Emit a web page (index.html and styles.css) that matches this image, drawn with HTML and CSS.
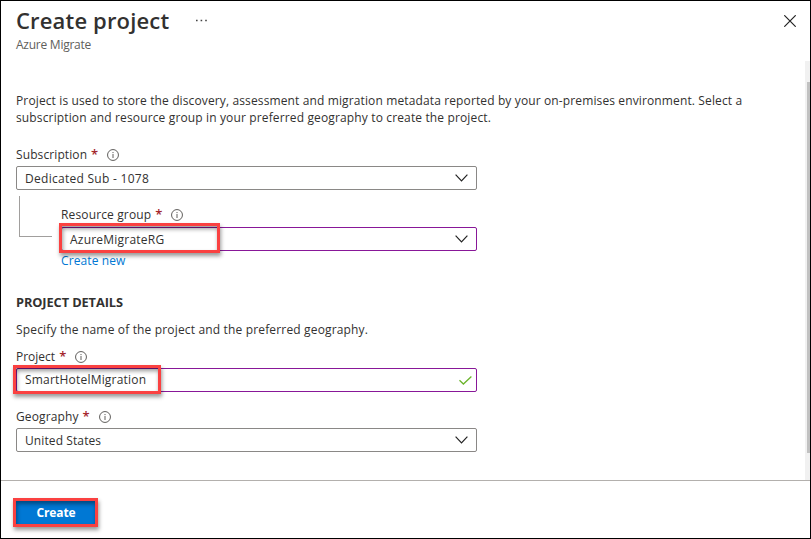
FILE: index.html
```html
<!DOCTYPE html>
<html lang="en">
<head>
<meta charset="utf-8">
<title>Create project</title>
<link rel="stylesheet" href="styles.css">
</head>
<body>
<div class="blade">
  <header class="header">
    <div class="title-row">
      <h1><span class="t-title">Create project</span></h1>
      <svg class="more" width="13" height="3" viewBox="0 0 13 3"><path d="M1 .7h1.6v1.6H1zM5.6 .7h1.6v1.6H5.6zM10.2 .7h1.6v1.6h-1.6z" fill="#444"/></svg>
      <svg class="close" width="12" height="12" viewBox="0 0 12 12"><path d="M.3 .3l11.4 11.4M11.7 .3L.3 11.7" stroke="#222" stroke-width="1.2"/></svg>
    </div>
    <div class="subtitle"><span class="t-sub">Azure Migrate</span></div>
  </header>
  <main class="content">
    <div class="form">
      <p class="intro"><span class="t-intro1">Project is used to store the discovery, assessment and migration metadata reported by your on-premises environment. Select a</span><br><span class="t-intro2">subscription and resource group in your preferred geography to create the project.</span></p>
      <div class="field">
        <label><span class="t-subscription">Subscription</span><b class="req">*</b><svg class="info" width="12" height="12" viewBox="0 0 12 12"><circle cx="6" cy="6" r="5.45"/><path d="M6 5v4M6 3v1.1"/></svg></label>
        <div class="box"><span class="t-dedicated">Dedicated Sub - 1078</span><svg class="chevron" width="14" height="8" viewBox="0 0 14 8"><path d="M.6 .7L6.5 6.8L12.4 .7"/></svg></div>
      </div>
      <div class="nested">
        <div class="branch"></div>
        <div class="field group">
          <label><span class="t-group">Resource group</span><b class="req">*</b><svg class="info" width="12" height="12" viewBox="0 0 12 12"><circle cx="6" cy="6" r="5.45"/><path d="M6 5v4M6 3v1.1"/></svg></label>
          <div class="box edited"><span class="t-rg">AzureMigrateRG</span><svg class="chevron" width="14" height="8" viewBox="0 0 14 8"><path d="M.6 .7L6.5 6.8L12.4 .7"/></svg><i class="mark mark-group"></i></div>
          <a class="new"><span class="t-new">Create new</span></a>
        </div>
      </div>
      <h2><span class="t-details">PROJECT DETAILS</span></h2>
      <p class="hint"><span class="t-hint">Specify the name of the project and the preferred geography.</span></p>
      <div class="field">
        <label><span class="t-project">Project</span><b class="req">*</b><svg class="info" width="12" height="12" viewBox="0 0 12 12"><circle cx="6" cy="6" r="5.45"/><path d="M6 5v4M6 3v1.1"/></svg></label>
        <div class="box edited"><span class="t-smart">SmartHotelMigration</span><svg class="check" width="13" height="9" viewBox="0 0 13 9"><path d="M.5 4.2L4.4 8L12.4 .6"/></svg><i class="mark mark-project"></i></div>
      </div>
      <div class="field geography">
        <label><span class="t-geo">Geography</span><b class="req">*</b><svg class="info" width="12" height="12" viewBox="0 0 12 12"><circle cx="6" cy="6" r="5.45"/><path d="M6 5v4M6 3v1.1"/></svg></label>
        <div class="box"><span class="t-us">United States</span><svg class="chevron" width="14" height="8" viewBox="0 0 14 8"><path d="M.6 .7L6.5 6.8L12.4 .7"/></svg></div>
      </div>
    </div>
    <div class="track"><div class="thumb"></div></div>
  </main>
  <footer class="footer">
    <button class="create"><span class="t-create">Create</span><i class="mark mark-create"></i></button>
  </footer>
</div>
</body>
</html>
```
FILE: styles.css
```css
* { box-sizing: border-box; }
body {
  margin: 0;
  font-family: "Open Sans", "Noto Sans", sans-serif;
  font-size: 12px;
  line-height: 17px;
  color: #323130;
  background: #fff;
}
h1, h2, p { margin: 0; }
svg { display: block; flex: none; fill: none; }
span { white-space: nowrap; }
.t-title { letter-spacing: .16px; }
.t-sub { letter-spacing: -.25px; }
.t-intro1 { letter-spacing: .126px; }
.t-intro2 { letter-spacing: .14px; }
.t-subscription { letter-spacing: .1px; }
.t-dedicated { letter-spacing: .28px; }
.t-group { letter-spacing: .14px; }
.t-rg { letter-spacing: .22px; }
.t-new { letter-spacing: .1px; }
.t-details { letter-spacing: -.1px; }
.t-hint { letter-spacing: .16px; }
.t-smart { letter-spacing: .2px; margin-bottom: 2px; }
.t-geo { letter-spacing: .12px; }
.t-us { letter-spacing: .1px; }
.t-create { letter-spacing: -.1px; }
.blade {
  width: 811px;
  height: 539px;
  border: 1px solid #000;
  display: flex;
  flex-direction: column;
  overflow: hidden;
}
.header { height: 60px; padding: 4px 14px 0 15px; }
.title-row { display: flex; align-items: center; height: 30px; }
h1 { width: 179px; font-size: 22px; line-height: 30px; font-weight: 600; }
.more { margin-top: 1px; }
.close { margin: 2px 0 0 auto; }
.subtitle { line-height: 17px; margin-top: 1px; color: #605e5c; }
.content { flex: 1; display: flex; min-height: 0; }
.form { flex: 1; padding: 31px 0 0 15px; }
.intro { height: 54px; }
.field { width: 461px; }
label { display: flex; align-items: center; height: 17px; margin-bottom: 3px; }
.req { color: #a4262c; font-size: 13px; line-height: 17px; font-weight: 600; margin-left: 4px; width: 6px; }
.info { margin-left: 10px; stroke: #605e5c; stroke-width: 1; }
.box {
  position: relative;
  display: flex;
  align-items: center;
  justify-content: space-between;
  height: 24px;
  padding: 0 8px;
  border: 1px solid #8a8886;
  border-radius: 2px;
}
.edited { border-color: #881798; }
.chevron { margin-right: -1px; stroke: #222; stroke-width: 1.2; }
.check { margin-right: -4px; stroke: #6bb42c; stroke-width: 1.3; }
.nested { display: flex; height: 104px; padding: 6px 0 0 3px; }
.branch { width: 33px; height: 41px; border: solid #a19f9d; border-width: 0 0 1px 1px; margin-right: 9px; }
.group { width: 416px; padding-top: 10px; }
.group label { margin-bottom: 4px; }
.new { display: block; margin-top: 1px; color: #0078d4; }
h2 { font-size: 12.8px; line-height: 17px; font-weight: 700; }
.hint { margin: 10px 0; }
.geography { margin-top: 16px; }
.mark {
  position: absolute;
  border: 3px solid #fa4141;
  box-shadow: 1px 3px 4px rgba(0, 0, 0, .4), inset 1px 3px 4px rgba(0, 0, 0, .4);
}
.mark-group { left: -3px; top: -5px; width: 161px; height: 30px; }
.mark-project { left: -4px; top: -4px; width: 148px; height: 29px; }
.mark-create { left: -3px; top: -3px; width: 85px; height: 29px; }
.track { width: 5px; padding: 21px 0 0 2px; background: #f1f1f1; }
.thumb { height: 371px; background: #c1c1c1; }
.footer { height: 58px; border-top: 1px solid #b3b0ad; padding: 20px 0 0 15px; }
.create {
  position: relative;
  display: block;
  width: 80px;
  height: 24px;
  padding: 0;
  border: 0;
  background: #0078d4;
  color: #fff;
  font: 700 12px/22px "Open Sans", sans-serif;
}
```
